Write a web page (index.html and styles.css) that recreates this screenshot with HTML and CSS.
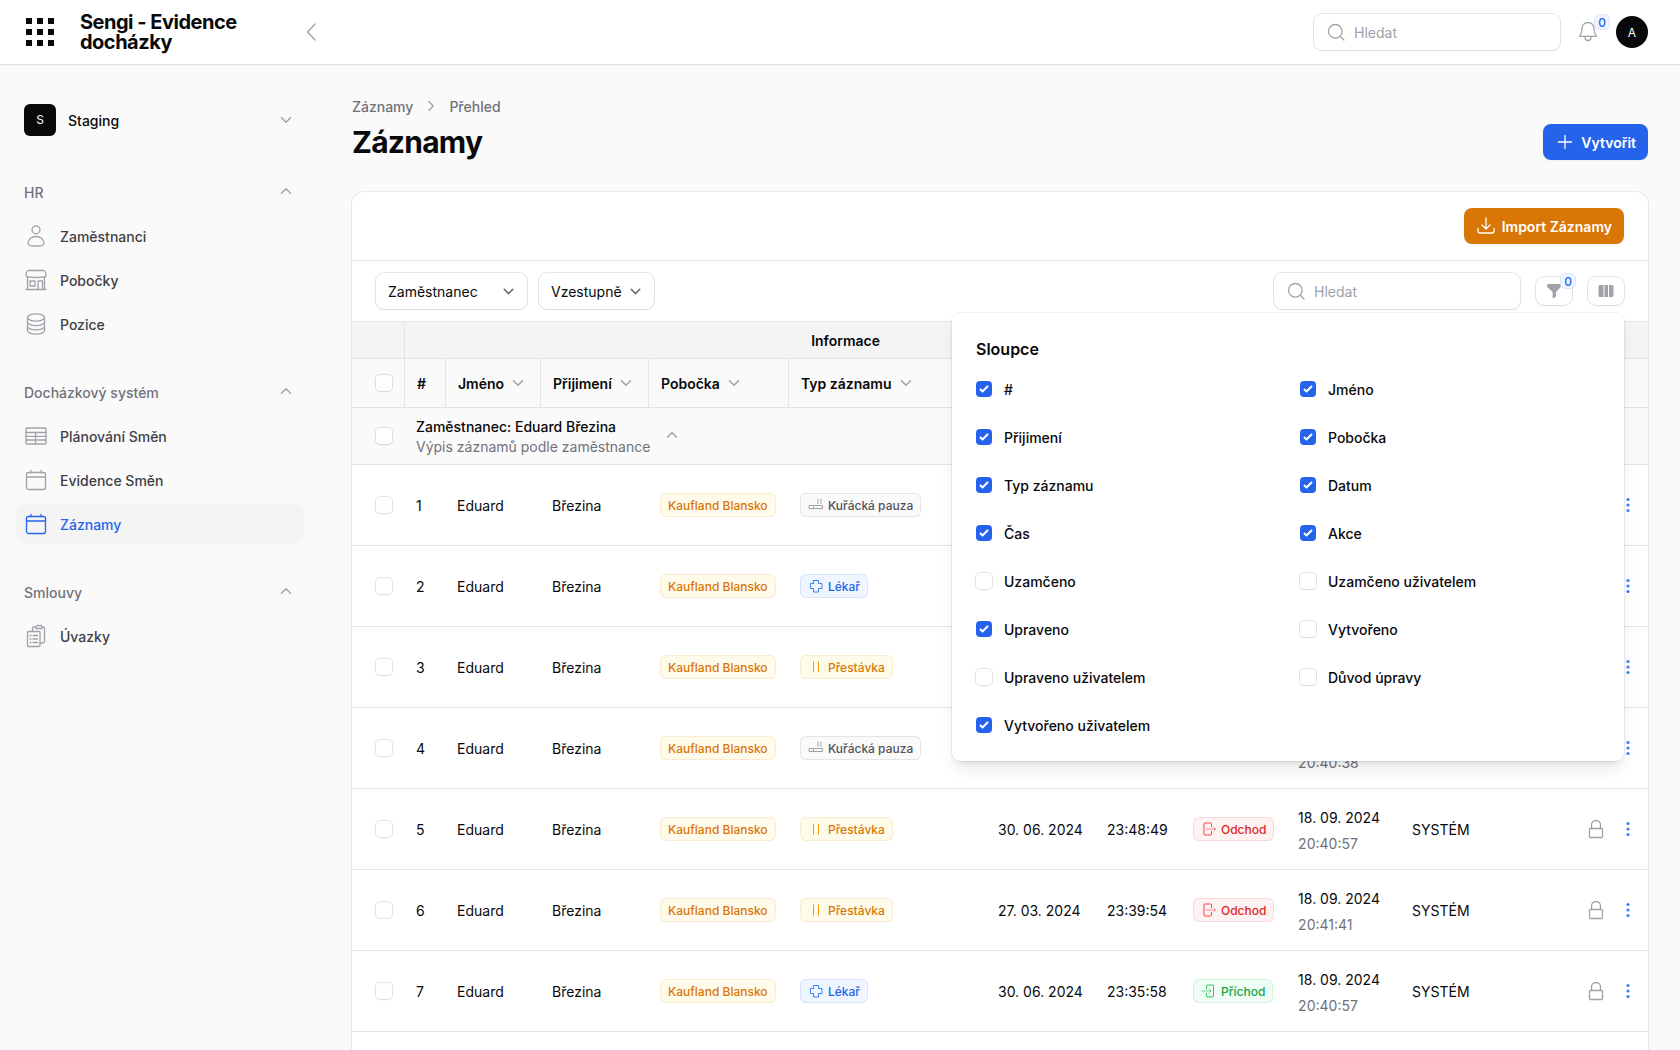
FILE: index.html
```html
<!DOCTYPE html>
<html lang="cs">
<head>
<meta charset="utf-8">
<meta name="viewport" content="width=device-width, initial-scale=1">
<title>Záznamy - Sengi - Evidence docházky</title>
<link rel="stylesheet" href="styles.css">
</head>
<body>
<svg class="sprite" aria-hidden="true">
  <symbol id="chev-down" viewBox="0 0 20 20"><path d="M5.5 7.8 10 12.2l4.500-4.400" /></symbol>
  <symbol id="chev-up" viewBox="0 0 20 20"><path d="M5.500 11.200 10 6.800l4.500 4.400" /></symbol>
  <symbol id="chev-right" viewBox="0 0 20 20"><path d="M7.800 5.500 12.200 10l-4.400 4.500" /></symbol>
  <symbol id="search" viewBox="0 0 20 20"><circle cx="9.300" cy="9.300" r="6.800"/><path d="m14.200 14.200 3.800 3.800"/></symbol>
  <symbol id="calendar" viewBox="0 0 24 24"><rect x="2.500" y="4.500" width="19" height="17" rx="2"/><path d="M2.500 9h19M7 2.500v2M17 2.500v2"/></symbol>
  <symbol id="smoke" viewBox="0 0 16 16"><path d="M1.500 8.500h13v3h-13zM5.500 8.500v3M10 6.500c-1-1.800.8-2.200 0-4.500M13 6.500c-1-1.800.8-2.200 0-4.500"/></symbol>
  <symbol id="cross" viewBox="0 0 16 16"><path d="M5.500 2.500h5v3h3.500v5h-3.500v3.500h-5v-3.500H2.500v-5h3z"/></symbol>
  <symbol id="pause" viewBox="0 0 16 16"><path d="M5.500 3v10M10.500 3v10"/></symbol>
  <symbol id="leave" viewBox="0 0 16 16"><path d="M10.500 5.500V3a1 1 0 0 0-1-1h-5.500a1 1 0 0 0-1 1v10a1 1 0 0 0 1 1h5.500a1 1 0 0 0 1-1v-2.500"/><path class="faint" d="M5.500 8h9M12.500 6l2 2-2 2"/></symbol>
  <symbol id="arrive" viewBox="0 0 16 16"><path d="M5.500 5.500V3a1 1 0 0 1 1-1h5a1 1 0 0 1 1 1v10a1 1 0 0 1-1 1h-5a1 1 0 0 1-1-1v-2.500"/><path class="faint" d="M1 8h9M8 6l2 2-2 2"/></symbol>
  <symbol id="lock" viewBox="0 0 24 24"><rect x="5.500" y="11.500" width="13" height="9" rx="1"/><path d="M7.500 11.500V8a4.500 4.500 0 0 1 9 0v3.500"/></symbol>
  <symbol id="dots" viewBox="0 0 24 24"><circle cx="12" cy="6.500" r="1.600"/><circle cx="12" cy="12" r="1.600"/><circle cx="12" cy="17.500" r="1.600"/></symbol>
</svg>

<header class="topbar">
  <div class="brand">
    <button class="plain apps" type="button" aria-label="Aplikace">
      <svg class="fill" width="32" height="32" viewBox="0 0 32 32"><path d="M2 2h6v6H2zM13 2h6v6h-6zM24 2h6v6h-6zM2 13h6v6H2zM13 13h6v6h-6zM24 13h6v6h-6zM2 24h6v6H2zM13 24h6v6h-6zM24 24h6v6h-6z"/></svg>
    </button>
    <div class="brand-name">Sengi - Evidence docházky</div>
    <button class="plain collapse" type="button" aria-label="Sbalit panel">
      <svg class="line" width="24" height="24" viewBox="0 0 24 24"><path d="M15 4 7.500 12l7.500 8"/></svg>
    </button>
  </div>
  <div class="topbar-end">
    <label class="search"><svg class="line" width="20" height="20"><use href="#search"/></svg><input type="search" placeholder="Hledat" aria-label="Globální hledání"></label>
    <button class="plain bell" type="button" aria-label="Oznámení">
      <svg class="line" width="24" height="24" viewBox="0 0 24 24"><path d="M12 2.500c-3.800 0-6 2.800-6 6.200 0 4.300-1 5.800-2.500 7.600h17c-1.500-1.800-2.500-3.300-2.500-7.600 0-3.400-2.200-6.200-6-6.200zM9 17.500a3 3 0 0 0 6 0"/></svg>
      <span class="count">0</span>
    </button>
    <button class="plain avatar" type="button">A</button>
  </div>
</header>

<div class="shell">
  <nav class="sidebar" aria-label="Hlavní navigace">
    <button class="plain tenant" type="button"><span class="tenant-logo">S</span><span class="grow">Staging</span><svg class="line" width="20" height="20"><use href="#chev-down"/></svg></button>

    <section class="group">
      <button class="plain group-head" type="button"><span>HR</span><svg class="line" width="20" height="20"><use href="#chev-up"/></svg></button>
      <a class="item" href="#"><svg class="line" width="24" height="24" viewBox="0 0 24 24"><circle cx="12" cy="5.800" r="4"/><path d="M4 19.500c0-4 3.500-7 8-7s8 3 8 7c0 1.600-3 2.500-8 2.500s-8-.9-8-2.500z"/></svg>Zaměstnanci</a>
      <a class="item" href="#"><svg class="line" width="24" height="24" viewBox="0 0 24 24"><path d="M4 2.500h16c1.500 1 2 2.500 2 4.500 0 1.500-1 2-2 2-1.500 0-2 .8-3 0-1.500.8-2 .8-3 0-1 .8-2.500.8-4 0-1 .8-2 .8-3 0-1 .8-1.500 0-3 0-1 0-2-.5-2-2 0-2 .5-3.500 2-4.500zM3.500 9v12M20.500 9v12M2 21.500h20"/><rect x="6" y="13" width="5" height="5"/><path d="M14 21.500v-8.500h4.500v8.500"/></svg>Pobočky</a>
      <a class="item" href="#"><svg class="line" width="24" height="24" viewBox="0 0 24 24"><ellipse cx="12" cy="5.500" rx="8.500" ry="3.700"/><path d="M3.500 5.500v13c0 2 3.800 3.700 8.500 3.700s8.500-1.700 8.500-3.700v-13M3.500 10c0 2 3.800 3.700 8.500 3.700s8.500-1.700 8.500-3.700M3.500 14.200c0 2 3.800 3.700 8.500 3.700s8.500-1.700 8.500-3.700"/></svg>Pozice</a>
    </section>

    <section class="group">
      <button class="plain group-head" type="button"><span>Docházkový systém</span><svg class="line" width="20" height="20"><use href="#chev-up"/></svg></button>
      <a class="item" href="#"><svg class="line" width="24" height="24" viewBox="0 0 24 24"><rect x="2" y="4" width="20" height="16" rx="1"/><path d="M2 8.500h20M2 12.300h20M2 16h20M11.500 8.500V20"/></svg>Plánování Směn</a>
      <a class="item" href="#"><svg class="line" width="24" height="24"><use href="#calendar"/></svg>Evidence Směn</a>
      <a class="item active" href="#" aria-current="page"><svg class="line" width="24" height="24"><use href="#calendar"/></svg>Záznamy</a>
    </section>

    <section class="group">
      <button class="plain group-head" type="button"><span>Smlouvy</span><svg class="line" width="20" height="20"><use href="#chev-up"/></svg></button>
      <a class="item" href="#"><svg class="line" width="24" height="24" viewBox="0 0 24 24"><rect x="3.500" y="7.500" width="12.500" height="15" rx="1"/><path d="M8.500 7.500V4.500a1.500 1.500 0 0 1 1.500-1.500h2M18 3h1a1.500 1.500 0 0 1 1.500 1.500v13a1.500 1.500 0 0 1-1.500 1.500h-3M12 4.500V3a1.500 1.500 0 0 1 1.500-1.500h3A1.500 1.500 0 0 1 18 3v1.500zM6 11.500h1M9 11.500h4.500M6 15h1M9 15h4.500M6 18.500h1M9 18.500h4.500"/></svg>Úvazky</a>
    </section>
  </nav>

  <main class="main">
    <nav class="crumbs" aria-label="Drobečková navigace"><a href="#">Záznamy</a><svg class="line" width="20" height="20"><use href="#chev-right"/></svg><a href="#">Přehled</a></nav>
    <div class="page-head">
      <h1>Záznamy</h1>
      <button class="btn primary" type="button"><svg class="line" width="20" height="20" viewBox="0 0 20 20"><path d="M10 3.500v13M3.500 10h13"/></svg>Vytvořit</button>
    </div>

    <div class="card">
      <div class="card-actions">
        <button class="btn warning" type="button"><svg class="line" width="20" height="20" viewBox="0 0 20 20"><path d="M10 2v10.500M6 9l4 4 4-4M2 12.500V15a2 2 0 0 0 2 2h12a2 2 0 0 0 2-2v-2.500"/></svg>Import Záznamy</button>
      </div>
      <div class="toolbar">
        <select class="select wide" aria-label="Seskupit podle"><option>Zaměstnanec</option></select>
        <select class="select" aria-label="Směr seskupení"><option>Vzestupně</option></select>
        <div class="toolbar-end">
          <label class="search"><svg class="line" width="20" height="20"><use href="#search"/></svg><input type="search" placeholder="Hledat" aria-label="Hledat v tabulce"></label>
          <button class="plain icon-btn" type="button" aria-label="Filtry"><svg class="fill" width="20" height="20" viewBox="0 0 20 20"><path d="M4 3h12a.8.8 0 0 1 .8.800v1.700a1.500 1.500 0 0 1-.5 1.100L12 11v4.500l-2.600 1.700a.5.5 0 0 1-.8-.4V11L3.700 6.600a1.500 1.500 0 0 1-.5-1.100V3.800A.8.8 0 0 1 4 3z"/></svg><span class="count">0</span></button>
          <div class="columns-menu">
            <button class="plain icon-btn" type="button" aria-label="Sloupce" aria-expanded="true"><svg class="fill" width="20" height="20" viewBox="0 0 20 20"><path d="M7.500 4H4a1.500 1.500 0 0 0-1.500 1.500v9A1.500 1.500 0 0 0 4 16h3.500zM8.500 4h3.500v12H8.500zM13 4h3a1.500 1.500 0 0 1 1.500 1.500v9A1.500 1.500 0 0 1 16 16h-3z"/></svg></button>
            <div class="panel">
              <h2>Sloupce</h2>
              <div class="panel-grid">
                <label><input type="checkbox" checked>#</label>
                <label><input type="checkbox" checked>Jméno</label>
                <label><input type="checkbox" checked>Přijimení</label>
                <label><input type="checkbox" checked>Pobočka</label>
                <label><input type="checkbox" checked>Typ záznamu</label>
                <label><input type="checkbox" checked>Datum</label>
                <label><input type="checkbox" checked>Čas</label>
                <label><input type="checkbox" checked>Akce</label>
                <label><input type="checkbox">Uzamčeno</label>
                <label><input type="checkbox">Uzamčeno uživatelem</label>
                <label><input type="checkbox" checked>Upraveno</label>
                <label><input type="checkbox">Vytvořeno</label>
                <label><input type="checkbox">Upraveno uživatelem</label>
                <label><input type="checkbox">Důvod úpravy</label>
                <label><input type="checkbox" checked>Vytvořeno uživatelem</label>
              </div>
            </div>
          </div>
        </div>
      </div>

      <table class="records">
        <colgroup><col class="c-check"><col class="c-num"><col class="c-first"><col class="c-last"><col class="c-branch"><col class="c-type"><col class="c-date"><col class="c-time"><col class="c-action"><col class="c-edited"><col><col class="c-tools"></colgroup>
        <thead>
          <tr class="head-groups"><td></td><th class="split" colspan="8" scope="colgroup">Informace</th><td class="split" colspan="2"></td><td></td></tr>
          <tr class="head-cols">
            <td class="check"><input type="checkbox" aria-label="Vybrat vše"></td>
            <th class="split" scope="col">#</th>
            <th class="split" scope="col"><button class="plain sort" type="button">Jméno<svg class="line" width="20" height="20"><use href="#chev-down"/></svg></button></th>
            <th class="split" scope="col"><button class="plain sort" type="button">Přijimení<svg class="line" width="20" height="20"><use href="#chev-down"/></svg></button></th>
            <th class="split" scope="col"><button class="plain sort" type="button">Pobočka<svg class="line" width="20" height="20"><use href="#chev-down"/></svg></button></th>
            <th class="split" scope="col"><button class="plain sort" type="button">Typ záznamu<svg class="line" width="20" height="20"><use href="#chev-down"/></svg></button></th>
            <th class="split" scope="col" aria-label="Datum"></th>
            <th class="split" scope="col" aria-label="Čas"></th>
            <th class="split" scope="col" aria-label="Akce"></th>
            <th class="split" scope="col" aria-label="Upraveno"></th>
            <th class="split" scope="col" aria-label="Vytvořeno uživatelem"></th>
            <td></td>
          </tr>
        </thead>
        <tbody>
          <tr class="group-row">
            <td class="check"><input type="checkbox" aria-label="Vybrat skupinu"></td>
            <td colspan="11"><div class="group-title"><div class="group-text"><div class="strong">Zaměstnanec: Eduard Březina</div><div class="muted">Výpis záznamů podle zaměstnance</div></div><button class="plain" type="button" aria-label="Sbalit skupinu"><svg class="line" width="20" height="20"><use href="#chev-up"/></svg></button></div></td>
          </tr>
          <tr><td class="check"><input type="checkbox" aria-label="Vybrat 1"></td><td>1</td><td>Eduard</td><td>Březina</td><td><span class="badge amber">Kaufland Blansko</span></td><td><span class="badge gray"><svg class="line" width="16" height="16"><use href="#smoke"/></svg>Kuřácká pauza</span></td><td></td><td></td><td></td><td></td><td></td><td><div class="tools"><svg class="line" width="24" height="24"><use href="#lock"/></svg><button class="plain more" type="button" aria-label="Akce"><svg class="fill" width="24" height="24"><use href="#dots"/></svg></button></div></td></tr>
          <tr><td class="check"><input type="checkbox" aria-label="Vybrat 2"></td><td>2</td><td>Eduard</td><td>Březina</td><td><span class="badge amber">Kaufland Blansko</span></td><td><span class="badge blue"><svg class="line" width="16" height="16"><use href="#cross"/></svg>Lékař</span></td><td></td><td></td><td></td><td></td><td></td><td><div class="tools"><svg class="line" width="24" height="24"><use href="#lock"/></svg><button class="plain more" type="button" aria-label="Akce"><svg class="fill" width="24" height="24"><use href="#dots"/></svg></button></div></td></tr>
          <tr><td class="check"><input type="checkbox" aria-label="Vybrat 3"></td><td>3</td><td>Eduard</td><td>Březina</td><td><span class="badge amber">Kaufland Blansko</span></td><td><span class="badge amber"><svg class="line" width="16" height="16"><use href="#pause"/></svg>Přestávka</span></td><td></td><td></td><td></td><td></td><td></td><td><div class="tools"><svg class="line" width="24" height="24"><use href="#lock"/></svg><button class="plain more" type="button" aria-label="Akce"><svg class="fill" width="24" height="24"><use href="#dots"/></svg></button></div></td></tr>
          <tr><td class="check"><input type="checkbox" aria-label="Vybrat 4"></td><td>4</td><td>Eduard</td><td>Březina</td><td><span class="badge amber">Kaufland Blansko</span></td><td><span class="badge gray"><svg class="line" width="16" height="16"><use href="#smoke"/></svg>Kuřácká pauza</span></td><td></td><td></td><td></td><td><div class="stamp">18. 09. 2024<span class="muted">20:40:38</span></div></td><td></td><td><div class="tools"><svg class="line" width="24" height="24"><use href="#lock"/></svg><button class="plain more" type="button" aria-label="Akce"><svg class="fill" width="24" height="24"><use href="#dots"/></svg></button></div></td></tr>
          <tr><td class="check"><input type="checkbox" aria-label="Vybrat 5"></td><td>5</td><td>Eduard</td><td>Březina</td><td><span class="badge amber">Kaufland Blansko</span></td><td><span class="badge amber"><svg class="line" width="16" height="16"><use href="#pause"/></svg>Přestávka</span></td><td>30. 06. 2024</td><td>23:48:49</td><td><span class="badge red"><svg class="line" width="16" height="16"><use href="#leave"/></svg>Odchod</span></td><td><div class="stamp">18. 09. 2024<span class="muted">20:40:57</span></div></td><td>SYSTÉM</td><td><div class="tools"><svg class="line" width="24" height="24"><use href="#lock"/></svg><button class="plain more" type="button" aria-label="Akce"><svg class="fill" width="24" height="24"><use href="#dots"/></svg></button></div></td></tr>
          <tr><td class="check"><input type="checkbox" aria-label="Vybrat 6"></td><td>6</td><td>Eduard</td><td>Březina</td><td><span class="badge amber">Kaufland Blansko</span></td><td><span class="badge amber"><svg class="line" width="16" height="16"><use href="#pause"/></svg>Přestávka</span></td><td>27. 03. 2024</td><td>23:39:54</td><td><span class="badge red"><svg class="line" width="16" height="16"><use href="#leave"/></svg>Odchod</span></td><td><div class="stamp">18. 09. 2024<span class="muted">20:41:41</span></div></td><td>SYSTÉM</td><td><div class="tools"><svg class="line" width="24" height="24"><use href="#lock"/></svg><button class="plain more" type="button" aria-label="Akce"><svg class="fill" width="24" height="24"><use href="#dots"/></svg></button></div></td></tr>
          <tr><td class="check"><input type="checkbox" aria-label="Vybrat 7"></td><td>7</td><td>Eduard</td><td>Březina</td><td><span class="badge amber">Kaufland Blansko</span></td><td><span class="badge blue"><svg class="line" width="16" height="16"><use href="#cross"/></svg>Lékař</span></td><td>30. 06. 2024</td><td>23:35:58</td><td><span class="badge green"><svg class="line" width="16" height="16"><use href="#arrive"/></svg>Příchod</span></td><td><div class="stamp">18. 09. 2024<span class="muted">20:40:57</span></div></td><td>SYSTÉM</td><td><div class="tools"><svg class="line" width="24" height="24"><use href="#lock"/></svg><button class="plain more" type="button" aria-label="Akce"><svg class="fill" width="24" height="24"><use href="#dots"/></svg></button></div></td></tr>
          <tr><td colspan="12"></td></tr>
        </tbody>
      </table>
    </div>
  </main>
</div>
</body>
</html>
```

FILE: styles.css
```css
:root {
  --ink: #09090b;
  --text: #3f3f46;
  --muted: #71717a;
  --faint: #a1a1aa;
  --line: #e4e4e5;
  --page: #fafafa;
  --blue: #2563eb;
  --ring: 0 0 0 1px rgba(9, 9, 11, .1), 0 1px 2px rgba(0, 0, 0, .05);
}

* { box-sizing: border-box; }

body {
  margin: 0;
  height: 100vh;
  display: flex;
  flex-direction: column;
  background: var(--page);
  color: var(--ink);
  font: 400 14px/21px Inter, "Noto Sans", sans-serif;
}

a { color: inherit; text-decoration: none; }
svg { display: block; flex: none; }
.sprite { position: absolute; width: 0; height: 0; }
.line { fill: none; stroke: currentColor; stroke-width: 1.3; stroke-linecap: round; stroke-linejoin: round; }
.fill { fill: currentColor; }
.faint { opacity: .6; }
.grow { flex: 1; }
.muted { color: var(--muted); }
.strong { font-weight: 500; }

.plain {
  margin: 0;
  padding: 0;
  border: 0;
  background: none;
  color: inherit;
  font: inherit;
  text-align: left;
  cursor: pointer;
}

/* Top bar */
.topbar {
  flex: none;
  height: 64px;
  display: flex;
  align-items: center;
  justify-content: space-between;
  padding: 0 32px 0 24px;
  background: #fff;
  box-shadow: 0 0 0 1px rgba(9, 9, 11, .07), 0 1px 2px rgba(0, 0, 0, .05);
  z-index: 2;
}
.brand { display: flex; align-items: center; gap: 24px; width: 300px; }
.brand-name { flex: 1; font-size: 20px; line-height: 20px; font-weight: 700; letter-spacing: -0.025em; }
.collapse { color: var(--faint); }
.topbar-end { display: flex; align-items: center; gap: 16px; }
.bell { position: relative; color: var(--faint); }
.plain.avatar {
  width: 32px;
  height: 32px;
  border-radius: 50%;
  background: var(--ink);
  color: #fff;
  font-size: 12px;
  text-align: center;
}

.search {
  display: flex;
  align-items: center;
  gap: 8px;
  width: 246px;
  height: 36px;
  padding: 0 12px;
  border-radius: 8px;
  background: #fff;
  box-shadow: var(--ring);
  color: var(--faint);
}
.search input {
  flex: 1;
  min-width: 0;
  height: 21px;
  padding: 0;
  border: 0;
  outline: 0;
  background: none;
  color: var(--ink);
  font: inherit;
}
.search input::placeholder { color: var(--faint); }

.count {
  position: absolute;
  top: -6px;
  right: -10px;
  width: 16px;
  height: 16px;
  border-radius: 6px;
  background: #eff6ff;
  box-shadow: inset 0 0 0 1px rgba(37, 99, 235, .1);
  color: var(--blue);
  font-size: 12px;
  line-height: 17px;
  font-weight: 500;
  text-align: center;
}

/* Sidebar */
.shell { flex: 1; min-height: 0; display: flex; }
.sidebar {
  flex: none;
  width: 320px;
  padding: 32px 16px;
  display: flex;
  flex-direction: column;
  gap: 28px;
}
.tenant { display: flex; align-items: center; gap: 12px; height: 48px; padding: 0 8px; font-weight: 500; }
.tenant-logo {
  width: 32px;
  height: 32px;
  border-radius: 6px;
  background: var(--ink);
  color: #fff;
  font-size: 12px;
  line-height: 32px;
  font-weight: 400;
  text-align: center;
}
.tenant .line, .group-head .line { color: var(--faint); stroke-width: 1.5; }
.group { display: flex; flex-direction: column; gap: 4px; }
.group-head {
  display: flex;
  align-items: center;
  justify-content: space-between;
  height: 40px;
  padding: 0 8px;
  color: var(--muted);
  font-weight: 500;
}
.item {
  display: flex;
  align-items: center;
  gap: 12px;
  height: 40px;
  padding: 0 8px;
  border-radius: 8px;
  color: var(--text);
  font-weight: 500;
}
.item .line { color: var(--faint); }
.item.active { background: #f4f4f5; color: var(--blue); }
.item.active .line { color: var(--blue); }

/* Page */
.main { flex: 1; min-width: 0; padding: 32px; overflow-y: auto; scrollbar-width: none; }
.crumbs { display: flex; align-items: center; gap: 8px; height: 20px; margin-bottom: 8px; color: var(--muted); font-weight: 500; }
.crumbs .line { color: var(--faint); }
.page-head { display: flex; align-items: center; justify-content: space-between; margin-bottom: 32px; }
h1 { margin: 0; font-size: 30px; line-height: 36px; font-weight: 700; letter-spacing: -0.025em; }

.btn {
  display: flex;
  align-items: center;
  gap: 6px;
  height: 36px;
  padding: 0 12px;
  border: 0;
  border-radius: 8px;
  color: #fff;
  font: inherit;
  font-weight: 600;
  box-shadow: 0 1px 2px rgba(0, 0, 0, .05);
  cursor: pointer;
}
.primary { background: var(--blue); }
.warning { background: #d97706; }

/* Card */
.card { border-radius: 12px; background: #fff; box-shadow: 0 0 0 1px rgba(9, 9, 11, .07), 0 1px 2px rgba(0, 0, 0, .05); }
.card-actions { display: flex; justify-content: flex-end; padding: 16px 24px; border-bottom: 1px solid var(--line); }
.toolbar { display: flex; align-items: center; gap: 12px; padding: 12px 24px; border-bottom: 1px solid var(--line); }
.toolbar-end { display: flex; align-items: center; gap: 16px; margin-left: auto; }
.select {
  appearance: none;
  width: 115px;
  height: 36px;
  padding: 0 32px 0 12px;
  border: 0;
  border-radius: 8px;
  background: #fff url("data:image/svg+xml,%3Csvg xmlns='http://www.w3.org/2000/svg' fill='none' viewBox='0 0 20 20'%3E%3Cpath stroke='%236b7280' stroke-linecap='round' stroke-linejoin='round' stroke-width='1.5' d='m6 8 4 4 4-4'/%3E%3C/svg%3E") no-repeat right 8px center / 21px 21px;
  box-shadow: var(--ring);
  color: var(--ink);
  font: inherit;
}
.select.wide { width: 151px; }
.icon-btn {
  position: relative;
  display: flex;
  align-items: center;
  justify-content: center;
  width: 36px;
  height: 28px;
  border-radius: 8px;
  box-shadow: var(--ring);
  color: var(--faint);
}
.icon-btn .count { top: -4px; right: -4px; }

/* Column chooser */
.columns-menu { position: relative; }
.panel {
  position: absolute;
  top: calc(100% + 8px);
  right: 0;
  z-index: 1;
  width: 672px;
  padding: 24px;
  border-radius: 8px;
  background: #fff;
  box-shadow: 0 0 0 1px rgba(9, 9, 11, .05), 0 10px 15px -3px rgba(0, 0, 0, .1), 0 4px 6px -4px rgba(0, 0, 0, .1);
}
.panel h2 { margin: 0 0 16px; font-size: 16px; line-height: 24px; font-weight: 600; }
.panel-grid { display: grid; grid-template-columns: 1fr 1fr; gap: 24px; }
.panel-grid label { display: flex; align-items: center; gap: 12px; height: 24px; font-weight: 500; }

input[type="checkbox"] {
  appearance: none;
  display: block;
  flex: none;
  width: 16px;
  height: 16px;
  margin: 0;
  border-radius: 4px;
  background: #fff;
  box-shadow: var(--ring);
}
input[type="checkbox"]:checked {
  background: var(--blue) url("data:image/svg+xml,%3Csvg viewBox='0 0 16 16' fill='%23fff' xmlns='http://www.w3.org/2000/svg'%3E%3Cpath d='M12.207 4.793a1 1 0 0 1 0 1.414l-5 5a1 1 0 0 1-1.414 0l-2-2a1 1 0 0 1 1.414-1.414L6.500 9.086l4.293-4.293a1 1 0 0 1 1.414 0z'/%3E%3C/svg%3E") center / 100% 100%;
  box-shadow: none;
}

/* Records table */
.records { width: 100%; table-layout: fixed; border-collapse: separate; border-spacing: 0; }
.c-check { width: 52px; }
.c-num { width: 41px; }
.c-first { width: 95px; }
.c-last { width: 108px; }
.c-branch { width: 140px; }
.c-type { width: 198px; }
.c-date { width: 109px; }
.c-time { width: 86px; }
.c-action { width: 105px; }
.c-edited { width: 114px; }
.c-tools { width: 84px; }

.records th, .records td {
  height: 81px;
  padding: 0 0 0 12px;
  border-bottom: 1px solid var(--line);
  text-align: left;
  vertical-align: middle;
  white-space: nowrap;
}
.records th { font-weight: 600; }
.records .split { border-left: 1px solid var(--line); }
.records .check { padding-left: 24px; }
.head-groups > * { background: #f4f4f5; }
.head-cols > *, .group-row > * { background: var(--page); }
.records .head-groups > * { height: 37px; }
.records .head-groups th { padding: 0; text-align: center; }
.records .head-cols > * { height: 49px; }
.records .group-row > * { height: 57px; }

.sort { display: flex; align-items: center; gap: 4px; }
.sort .line, .group-title .line { color: var(--faint); stroke-width: 1.5; }
.group-title { display: flex; align-items: center; gap: 12px; }
.group-text { padding-top: 2px; line-height: 20px; }
.stamp { display: flex; flex-direction: column; gap: 1px; padding-top: 2px; line-height: 25px; }

.badge {
  display: inline-flex;
  align-items: center;
  gap: 4px;
  height: 24px;
  padding: 0 8px;
  border-radius: 6px;
  font-size: 12px;
  line-height: 17px;
  font-weight: 500;
  vertical-align: middle;
}
.badge .line { stroke-width: 1; }
.amber { background: #fffbeb; color: #d97706; box-shadow: inset 0 0 0 1px rgba(217, 119, 6, .12); }
.amber .line { color: #f59e0b; }
.gray { background: #fafafa; color: #52525b; box-shadow: inset 0 0 0 1px rgba(82, 82, 91, .12); }
.gray .line { color: var(--faint); }
.blue { background: #eff6ff; color: #2563eb; box-shadow: inset 0 0 0 1px rgba(37, 99, 235, .12); }
.blue .line { color: #3b82f6; }
.red { background: #fef2f2; color: #dc2626; box-shadow: inset 0 0 0 1px rgba(220, 38, 38, .12); }
.red .line { color: #ef4444; }
.green { background: #f0fdf4; color: #16a34a; box-shadow: inset 0 0 0 1px rgba(22, 163, 74, .12); }
.green .line { color: #22c55e; }

.tools { display: flex; justify-content: flex-end; gap: 8px; padding-right: 8px; color: var(--faint); }
.more { color: #3b82f6; }
```
